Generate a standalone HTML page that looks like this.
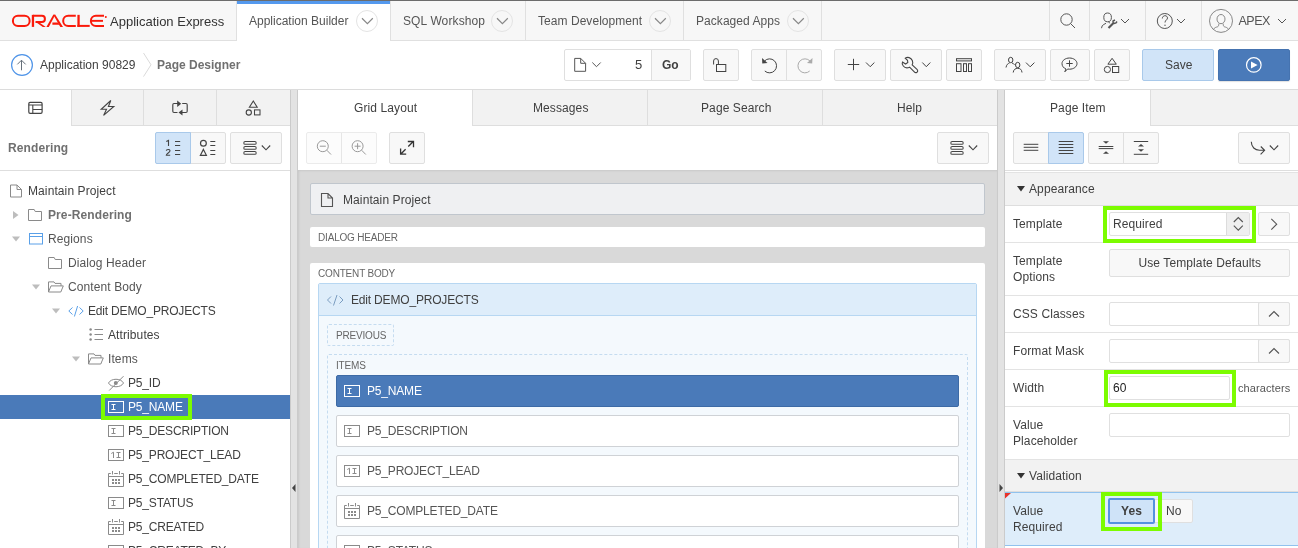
<!DOCTYPE html>
<html><head><meta charset="utf-8">
<style>
*{box-sizing:border-box}
html,body{margin:0;padding:0}
body{width:1298px;height:548px;overflow:hidden;position:relative;font-family:"Liberation Sans",sans-serif;color:#404040;background:#fff}
.a{position:absolute}
.t{position:absolute;white-space:nowrap;line-height:16px}
.btn{position:absolute;background:#f8f8f8;border:1px solid #dfdfdf;border-radius:2px}
svg{position:absolute;overflow:visible}
.ic{fill:none}
</style></head><body>
<div id="root" style="position:absolute;left:0;top:0;width:1298px;height:548px;overflow:hidden;will-change:transform">
<!-- ===== HEADER ===== -->
<div class="a" style="left:0;top:0;width:1298px;height:1px;background:#6c6c6c"></div>
<div class="a" style="left:0;top:1px;width:1298px;height:39px;background:#f7f7f7"></div>
<div class="a" style="left:0;top:40px;width:1298px;height:1px;background:#e0e0e0"></div>
<!-- logo -->
<svg style="left:0;top:0" width="120" height="40" viewBox="0 0 120 40">
<g fill="#fa1a0a">
<rect x="12.9" y="15.85" width="16.75" height="10.05" rx="5.025" fill="none" stroke="#fa1a0a" stroke-width="2"/>
<rect x="31.8" y="14.85" width="2.3" height="12.05"/>
<path d="M33,15.85 H41.9 A3.025,3.025 0 0 1 41.9,21.9 H35.5" fill="none" stroke="#fa1a0a" stroke-width="2"/>
<polygon points="35.7,21.9 38.6,21.9 45.8,26.9 42.8,26.9"/>
<polygon points="53.3,14.85 55.3,14.85 48.8,26.9 46.4,26.9"/>
<polygon points="53.3,14.85 55.3,14.85 63,26.9 60.3,26.9"/>
<polygon points="52.4,22.6 58.2,22.6 59.5,24.8 52.4,24.8"/>
<path d="M75.8,15.85 H68.2 A5.025,5.025 0 0 0 68.2,25.9 H75.8" fill="none" stroke="#fa1a0a" stroke-width="2"/>
<rect x="77.4" y="14.85" width="2.3" height="12.05"/>
<rect x="77.4" y="24.9" width="12.3" height="2"/>
<path d="M104,15.85 H95.9 A5.025,5.025 0 0 0 95.9,25.9 H104" fill="none" stroke="#fa1a0a" stroke-width="2"/>
<rect x="91.2" y="19.9" width="11.8" height="1.9"/>
<circle cx="105.8" cy="16.9" r="1"/>
</g>
</svg>
<div class="t" style="left:110px;top:14px;font-size:13px;color:#333">Application Express</div>
<!-- active tab -->
<div class="a" style="left:236px;top:1px;width:155px;height:40px;background:#fff;border-left:1px solid #e0e0e0;border-right:1px solid #e0e0e0"></div>
<div class="a" style="left:237px;top:1px;width:153px;height:3px;background:#5499ee"></div>
<div class="t" style="left:249px;top:13px;font-size:12px;color:#555">Application Builder</div>
<div class="a" style="left:356px;top:10px;width:22px;height:22px;border:1px solid #e4e4e4;border-radius:50%"></div>
<svg style="left:0;top:0" width="1" height="1"><path class="ic" d="M362,18.3 L367.4,23.6 L372.8,18.3" stroke="#888" stroke-width="1.2"/></svg>
<!-- SQL Workshop tab -->
<div class="t" style="left:403px;top:13px;font-size:12px;color:#555;letter-spacing:0.12px">SQL Workshop</div>
<div class="a" style="left:491px;top:10px;width:22px;height:22px;border:1px solid #e4e4e4;border-radius:50%"></div>
<svg style="left:0;top:0" width="1" height="1"><path class="ic" d="M497,18.3 L502.4,23.6 L507.8,18.3" stroke="#888" stroke-width="1.2"/></svg>
<div class="a" style="left:525px;top:1px;width:1px;height:39px;background:#e0e0e0"></div>
<div class="t" style="left:538px;top:13px;font-size:12px;color:#555;letter-spacing:0.05px">Team Development</div>
<div class="a" style="left:649px;top:10px;width:22px;height:22px;border:1px solid #e4e4e4;border-radius:50%"></div>
<svg style="left:0;top:0" width="1" height="1"><path class="ic" d="M655,18.3 L660.4,23.6 L665.8,18.3" stroke="#888" stroke-width="1.2"/></svg>
<div class="a" style="left:683px;top:1px;width:1px;height:39px;background:#e0e0e0"></div>
<div class="t" style="left:696px;top:13px;font-size:12px;color:#555;letter-spacing:0.05px">Packaged Apps</div>
<div class="a" style="left:787px;top:10px;width:22px;height:22px;border:1px solid #e4e4e4;border-radius:50%"></div>
<svg style="left:0;top:0" width="1" height="1"><path class="ic" d="M793,18.3 L798.4,23.6 L803.8,18.3" stroke="#888" stroke-width="1.2"/></svg>
<div class="a" style="left:821px;top:1px;width:1px;height:39px;background:#e0e0e0"></div>
<!-- right header icons -->
<div class="a" style="left:1049px;top:1px;width:1px;height:39px;background:#e0e0e0"></div>
<div class="a" style="left:1089px;top:1px;width:1px;height:39px;background:#e0e0e0"></div>
<div class="a" style="left:1145px;top:1px;width:1px;height:39px;background:#e0e0e0"></div>
<div class="a" style="left:1201px;top:1px;width:1px;height:39px;background:#e0e0e0"></div>
<svg style="left:0;top:0" width="1" height="1">
<circle class="ic" cx="1066.5" cy="19.5" r="5.7" stroke="#555"/>
<path class="ic" d="M1070.5,23.5 L1075,28" stroke="#555"/>
<ellipse class="ic" cx="1107.6" cy="17.4" rx="3.8" ry="4.4" stroke="#555"/>
<path class="ic" d="M1101.5,28.2 L1102.2,25.8 C1103,24.8 1104.5,24 1106,23.3 M1108.8,21.8 L1109.6,23.3" stroke="#555"/>
<path d="M1108.5,28 L1114,22.5" stroke="#555" stroke-width="2.2" fill="none"/>
<path d="M1113,22.5 L1113,21 L1115,20 M1114,23.5 L1116,23 L1117,21.5" stroke="#555" stroke-width="1.4" fill="none"/>
<path class="ic" d="M1121,19 L1125,23 L1129,19" stroke="#555"/>
<circle class="ic" cx="1164.8" cy="21" r="7.5" stroke="#555"/>
<path class="ic" d="M1162.3,18.5 C1162.3,16.5 1164,15.7 1165,15.7 C1166.5,15.7 1167.5,16.7 1167.5,18 C1167.5,20 1165,20 1165,22.5" stroke="#555"/>
<circle cx="1165" cy="25.3" r="0.7" fill="#555"/>
<path class="ic" d="M1177,19 L1181,23 L1185,19" stroke="#555"/>
<circle class="ic" cx="1221" cy="20.9" r="11.5" stroke="#888"/>
<ellipse class="ic" cx="1221" cy="19.1" rx="4" ry="4.6" stroke="#888"/>
<path class="ic" d="M1213.5,29.3 C1214.5,27.5 1216,27.3 1217.5,26.8 C1218.5,26.4 1218.8,25.5 1218.8,23.6 M1228.5,29.3 C1227.5,27.5 1226,27.3 1224.5,26.8 C1223.5,26.4 1223.2,25.5 1223.2,23.6" stroke="#888"/>
<path class="ic" d="M1278,19 L1282,23 L1286,19" stroke="#555"/>
</svg>
<div class="t" style="left:1238.5px;top:13px;font-size:12.5px;color:#555;letter-spacing:-0.5px">APEX</div>
<!-- ===== TOOLBAR ===== -->
<div class="a" style="left:0;top:89px;width:1298px;height:1px;background:#dcdcdc"></div>
<svg style="left:0;top:0" width="1" height="1">
<circle cx="22" cy="65" r="10.4" fill="none" stroke="#4f94e8" stroke-width="1.2"/>
<path class="ic" d="M21.5,60.2 V70.3 M17.3,64.4 L21.5,60.2 L25.7,64.4" stroke="#66707a"/>
<path d="M143.5,53 L151,64.8 L143.5,76.6" fill="none" stroke="#dadada" stroke-width="1"/>
</svg>
<div class="t" style="left:40px;top:57px;font-size:12px;color:#404040">Application 90829</div>
<div class="t" style="left:157px;top:57px;font-size:12px;font-weight:bold;color:#707070">Page Designer</div>
<!-- page selector -->
<div class="btn" style="left:564px;top:49px;width:127px;height:32px;background:#fff"></div>
<div class="a" style="left:651px;top:50px;width:39px;height:30px;background:#f8f8f8;border-left:1px solid #dfdfdf"></div>
<svg style="left:0;top:0" width="1" height="1">
<path class="ic" d="M574.7,58.4 H580.7 L585.6,63.3 V71.3 H574.7 Z M580.7,58.4 V63.3 H585.6" stroke="#555"/>
<path class="ic" d="M592.3,62.5 L596.5,66.7 L600.7,62.5" stroke="#555"/>
</svg>
<div class="t" style="left:635px;top:57px;font-size:13px;color:#404040">5</div>
<div class="t" style="left:662px;top:57px;font-size:12px;font-weight:bold;color:#404040">Go</div>
<!-- lock -->
<div class="btn" style="left:703px;top:49px;width:36px;height:32px"></div>
<svg style="left:0;top:0" width="1" height="1">
<path class="ic" d="M713.6,64.5 V61 A2.4,2.4 0 0 1 718.4,61 V64.5" stroke="#444"/>
<rect class="ic" x="716.5" y="64.5" width="9.3" height="7" stroke="#444"/>
</svg>
<!-- undo redo -->
<div class="btn" style="left:751px;top:49px;width:71px;height:32px"></div>
<div class="a" style="left:786px;top:50px;width:1px;height:30px;background:#dfdfdf"></div>
<svg style="left:0;top:0" width="1" height="1">
<path class="ic" d="M764.5,61 A7,7 0 1 1 764.8,71" stroke="#444"/>
<polygon points="762,58 762.3,63.5 767.5,63" fill="#444"/>
<path class="ic" d="M810,61 A7,7 0 1 0 809.7,71" stroke="#aaa"/>
<polygon points="812.5,58 812.2,63.5 807,63" fill="#aaa"/>
</svg>
<!-- plus -->
<div class="btn" style="left:834px;top:49px;width:52px;height:32px"></div>
<svg style="left:0;top:0" width="1" height="1">
<path class="ic" d="M847.8,64.5 H859.2 M853.5,58.8 V70.2" stroke="#444"/>
<path class="ic" d="M866,62.5 L870.2,66.7 L874.4,62.5" stroke="#444"/>
</svg>
<!-- wrench -->
<div class="btn" style="left:890px;top:49px;width:52px;height:32px"></div>
<svg style="left:0;top:0" width="1" height="1">
<path class="ic" d="M905.3,58.3 C907.5,56.5 911,57.5 912.3,60.5 C913,62.3 912.8,63.8 912.2,64.8 L917,69.3 C918,70.3 917.8,71.5 917,72.2 C916.2,72.8 915,72.7 914.3,71.9 L909.6,67.2 C908,67.9 905,68.2 903.3,66 C902,64.5 902,63 902.5,62 L905.6,64 L907.8,62.5 L907.5,60.3 Z" stroke="#444" stroke-width="1.1"/>
<path class="ic" d="M922.3,62.5 L926.3,66.7 L930.3,62.5" stroke="#444"/>
</svg>
<!-- grid -->
<div class="btn" style="left:946px;top:49px;width:36px;height:32px"></div>
<svg style="left:0;top:0" width="1" height="1">
<rect class="ic" x="956.5" y="58.7" width="15" height="2.2" stroke="#444"/>
<rect class="ic" x="956.5" y="63.7" width="4.5" height="7.8" stroke="#444"/>
<rect class="ic" x="963.5" y="63.7" width="3" height="7.8" stroke="#444"/>
<rect class="ic" x="968.5" y="63.7" width="3" height="7.8" stroke="#444"/>
</svg>
<!-- people -->
<div class="btn" style="left:994px;top:49px;width:52px;height:32px"></div>
<svg style="left:0;top:0" width="1" height="1">
<ellipse class="ic" cx="1010.7" cy="60" rx="2.2" ry="2.7" stroke="#444"/>
<path class="ic" d="M1006,67.5 C1006.5,64.5 1008,63.5 1009.5,63" stroke="#444"/>
<path class="ic" d="M1012,63 C1013,63.3 1014,63.8 1014.5,64.8" stroke="#444"/>
<ellipse class="ic" cx="1017.7" cy="65" rx="2.2" ry="2.7" stroke="#444"/>
<path class="ic" d="M1013.2,72.5 C1013.5,69.5 1015.5,68.3 1017.7,68.3 C1020,68.3 1021.8,69.5 1022,72.5" stroke="#444"/>
<path class="ic" d="M1026,62.6 L1030.2,66.8 L1034.4,62.6" stroke="#444"/>
</svg>
<!-- comment -->
<div class="btn" style="left:1050px;top:49px;width:40px;height:32px"></div>
<svg style="left:0;top:0" width="1" height="1">
<path class="ic" d="M1066,69 C1063.5,68 1062,66 1062,63.6 C1062,60.5 1065.3,58 1069.5,58 C1073.7,58 1077,60.5 1077,63.6 C1077,66.7 1073.7,69.2 1069.5,69.2 C1068.8,69.2 1068.2,69.1 1067.6,69 L1064.8,71.8 Z" stroke="#444"/>
<path class="ic" d="M1066.3,63.5 H1072.7 M1069.5,60.3 V66.7" stroke="#444"/>
</svg>
<!-- shapes -->
<div class="btn" style="left:1094px;top:49px;width:36px;height:32px"></div>
<svg style="left:0;top:0" width="1" height="1">
<path class="ic" d="M1112.1,58.3 L1116.3,64.2 H1107.9 Z" stroke="#444"/>
<circle class="ic" cx="1107.4" cy="69.5" r="3.1" stroke="#444"/>
<rect class="ic" x="1112.5" y="66.5" width="6.2" height="6" stroke="#444"/>
</svg>
<!-- save / run -->
<div class="btn" style="left:1142px;top:49px;width:72px;height:32px;background:#d1e4f8;border-color:#a9c9ea"></div>
<div class="t" style="left:1165px;top:57px;font-size:12px;color:#404040">Save</div>
<div class="btn" style="left:1218px;top:49px;width:72px;height:32px;background:#4a7ab9;border-color:#4573b0;box-shadow:0 1px 1px rgba(0,0,0,.12)"></div>
<svg style="left:0;top:0" width="1" height="1">
<circle cx="1253.8" cy="64.9" r="7.3" fill="none" stroke="#fff" stroke-width="1.2"/>
<polygon points="1251,61.6 1257.6,65 1251,68.4" fill="#fff"/>
</svg>
<div class="a" style="left:0px;top:90px;width:290px;height:35px;background:#f2f2f2"></div>
<div class="a" style="left:0px;top:90px;width:71px;height:36px;background:#fff"></div>
<div class="a" style="left:71px;top:125px;width:219px;height:1px;background:#dedede"></div>
<div class="a" style="left:71px;top:90px;width:1px;height:35px;background:#dedede"></div>
<div class="a" style="left:143px;top:90px;width:1px;height:35px;background:#dedede"></div>
<div class="a" style="left:216px;top:90px;width:1px;height:35px;background:#dedede"></div>
<svg style="left:0;top:0" width="1" height="1">
<rect class="ic" x="28.8" y="102.4" width="13.3" height="11" rx="1.3" stroke="#444" stroke-width="1.2"/>
<path class="ic" d="M28.8,105 H42.1 M32.8,105 V113.4 M32.8,109.5 H42.1" stroke="#444" stroke-width="1.1"/>
<path class="ic" d="M110.8,100.5 L101.2,109.3 H106.5 L103.6,115.4 L113.8,106.5 H108.4 Z" stroke="#444" stroke-width="1.1"/>
<path class="ic" d="M178.4,103.5 H174 Q172.8,103.5 172.8,104.7 V111.3 Q172.8,112.5 174,112.5 H177.5 M182.2,103.5 H186 Q187.2,103.5 187.2,104.7 V111.3 Q187.2,112.5 186,112.5 H181.2" stroke="#444" stroke-width="1.15"/>
<polygon points="177.2,100.5 181.2,103.7 177.2,106.9" fill="#444"/>
<polygon points="182.5,109.4 178.5,112.5 182.5,115.6" fill="#444"/>
<path class="ic" d="M253.3,101 L257.2,107.2 H249.4 Z" stroke="#444" stroke-width="1.1"/>
<circle class="ic" cx="248.8" cy="112.5" r="2.6" stroke="#444" stroke-width="1.1"/>
<rect class="ic" x="254.5" y="109.9" width="5.5" height="5" stroke="#444" stroke-width="1.05"/>
</svg>
<div class="a" style="left:0px;top:170px;width:290px;height:1px;background:#dedede"></div>
<div class="t" style="left:8px;top:140.34px;font-size:12px;color:#707070;letter-spacing:0.1px;font-weight:bold;">Rendering</div>
<div class="btn" style="left:155px;top:132px;width:71px;height:32px"></div>
<div class="a" style="left:155px;top:132px;width:36px;height:32px;background:#d1e4f8;border:1px solid #a9c9ea;border-radius:2px 0 0 2px"></div>
<div class="btn" style="left:230px;top:132px;width:52px;height:32px"></div>
<svg style="left:0;top:0" width="1" height="1">
<path class="ic" d="M166.3,141.6 L168.5,140.5 V146" stroke="#444" stroke-width="1.1"/>
<path class="ic" d="M166.3,150.8 C166.3,149.3 170,148.8 170,150.8 C170,152.5 166.3,153.5 166.3,155.3 H170.2" stroke="#444" stroke-width="1.1"/>
<path class="ic" d="M175,141.5 H180.2 M175,145.5 H180.2 M175,150.5 H180.2 M175,154.5 H180.2" stroke="#444" stroke-width="1"/>
<circle class="ic" cx="203.4" cy="143.3" r="2.9" stroke="#444" stroke-width="1.2"/>
<path class="ic" d="M203.4,149.4 L206.4,155.3 H200.4 Z" stroke="#444" stroke-width="1.2"/>
<path class="ic" d="M210.3,141.5 H215.3 M210.3,145.5 H215.3 M210.3,150.5 H215.3 M210.3,154.5 H215.3" stroke="#444" stroke-width="1"/>
<rect class="ic" x="243.8" y="141.5" width="12.4" height="2.8" rx="1.4" stroke="#444" stroke-width="1.05"/>
<rect class="ic" x="243.8" y="146.5" width="12.4" height="2.8" rx="1.4" stroke="#444" stroke-width="1.05"/>
<rect class="ic" x="243.8" y="151.5" width="12.4" height="2.8" rx="1.4" stroke="#444" stroke-width="1.05"/>
<path class="ic" d="M261.8,145.5 L266,149.8 L270.2,145.5" stroke="#444" stroke-width="1.1"/>
</svg>
<div class="a" style="left:0px;top:395px;width:290px;height:24px;background:#4a7ab9"></div>
<div class="t" style="left:28px;top:182.84px;font-size:12px;color:#404040;letter-spacing:0.1px;">Maintain Project</div>
<div class="t" style="left:48px;top:206.84px;font-size:12px;color:#707070;letter-spacing:0.1px;font-weight:bold;">Pre-Rendering</div>
<div class="t" style="left:48px;top:230.84px;font-size:12px;color:#555;letter-spacing:0.1px;">Regions</div>
<div class="t" style="left:68px;top:254.84px;font-size:12px;color:#555;letter-spacing:0.1px;">Dialog Header</div>
<div class="t" style="left:68px;top:278.84px;font-size:12px;color:#555;letter-spacing:0.1px;">Content Body</div>
<div class="t" style="left:88px;top:302.84px;font-size:12px;color:#404040;letter-spacing:-0.18px;">Edit DEMO_PROJECTS</div>
<div class="t" style="left:108px;top:326.84px;font-size:12px;color:#404040;letter-spacing:0.1px;">Attributes</div>
<div class="t" style="left:108px;top:350.84px;font-size:12px;color:#555;letter-spacing:0.1px;">Items</div>
<div class="t" style="left:128px;top:374.84px;font-size:12px;color:#404040;letter-spacing:-0.18px;">P5_ID</div>
<div class="t" style="left:128px;top:398.84px;font-size:12px;color:#fff;letter-spacing:-0.18px;">P5_NAME</div>
<div class="t" style="left:128px;top:422.84px;font-size:12px;color:#404040;letter-spacing:-0.18px;">P5_DESCRIPTION</div>
<div class="t" style="left:128px;top:446.84px;font-size:12px;color:#404040;letter-spacing:-0.18px;">P5_PROJECT_LEAD</div>
<div class="t" style="left:128px;top:470.84px;font-size:12px;color:#404040;letter-spacing:-0.18px;">P5_COMPLETED_DATE</div>
<div class="t" style="left:128px;top:494.84px;font-size:12px;color:#404040;letter-spacing:-0.18px;">P5_STATUS</div>
<div class="t" style="left:128px;top:518.84px;font-size:12px;color:#404040;letter-spacing:-0.18px;">P5_CREATED</div>
<div class="t" style="left:128px;top:542.84px;font-size:12px;color:#404040;letter-spacing:-0.18px;">P5_CREATED_BY</div>
<svg style="left:0;top:0" width="1" height="1"><path class="ic" d="M10.5,185.0 H17 L21.5,189.5 V197.0 H10.5 Z M17,185.0 V189.5 H21.5" stroke="#8a8a8a"/><polygon points="13,211 18.5,215 13,219" fill="#bdbdbd"/><path class="ic" d="M28.5,209.5 H34.2 L35.2,211.5 H41.5 V220.5 H28.5 Z" stroke="#8a8a8a"/><polygon points="12,236.5 20,236.5 16,241.5" fill="#bdbdbd"/><rect class="ic" x="29.5" y="233.5" width="13" height="10.5" stroke="#5aa0e8"/><path class="ic" d="M29.5,236.5 H42.5" stroke="#5aa0e8"/><path class="ic" d="M48.5,257.5 H54.2 L55.2,259.5 H61.5 V268.5 H48.5 Z" stroke="#8a8a8a"/><polygon points="32,284.5 40,284.5 36,289.5" fill="#bdbdbd"/><path class="ic" d="M48.5,292.0 V281.9 H54 L55,283.4 H61 V285.9 M48.5,292.0 L51,285.9 H63.3 L60.8,292.0 Z" stroke="#8a8a8a"/><polygon points="52,308.5 60,308.5 56,313.5" fill="#bdbdbd"/><path class="ic" d="M72.5,307.5 L68.8,311 L72.5,314.5 M79.5,307.5 L83.2,311 L79.5,314.5 M77.6,306 L74.4,316.5" stroke="#5aa0e8"/><circle cx="90.6" cy="329.5" r="1.25" fill="#8a8a8a"/><path class="ic" d="M94.5,329.5 H103" stroke="#8a8a8a"/><circle cx="90.6" cy="334.5" r="1.25" fill="#8a8a8a"/><path class="ic" d="M94.5,334.5 H103" stroke="#8a8a8a"/><circle cx="90.6" cy="339.5" r="1.25" fill="#8a8a8a"/><path class="ic" d="M94.5,339.5 H103" stroke="#8a8a8a"/><polygon points="72,356.5 80,356.5 76,361.5" fill="#bdbdbd"/><path class="ic" d="M88.5,364.0 V353.9 H94 L95,355.4 H101 V357.9 M88.5,364.0 L91,357.9 H103.3 L100.8,364.0 Z" stroke="#8a8a8a"/><path class="ic" d="M108.5,383 C111,378 121,378 123.5,383 C121,388 111,388 108.5,383 Z" stroke="#8a8a8a"/><circle cx="115.8" cy="383" r="2" fill="#8a8a8a"/><path class="ic" d="M109.2,390.5 L123.5,376.2" stroke="#8a8a8a"/><rect class="ic" x="108.5" y="401.5" width="15" height="11" stroke="#fff"/><path class="ic" d="M111.5,404.5 H115.5 M113.5,404.5 V409.5 M111.5,409.5 H115.5" stroke="#fff" stroke-width="1"/><rect class="ic" x="108.5" y="425.5" width="15" height="11" stroke="#8a8a8a"/><path class="ic" d="M111.5,428.5 H115.5 M113.5,428.5 V433.5 M111.5,433.5 H115.5" stroke="#8a8a8a" stroke-width="1"/><rect class="ic" x="108.5" y="449.5" width="15" height="11" stroke="#8a8a8a"/><path class="ic" d="M116.5,452.5 H120.5 M118.5,452.5 V457.5 M116.5,457.5 H120.5" stroke="#8a8a8a" stroke-width="1"/><path class="ic" d="M111.3,453.5 L113.5,452.2 V458" stroke="#8a8a8a"/><path class="ic" d="M110.8,473.5 H108.5 V486.5 H123.5 V473.5 H121.2 M114.2,473.5 H117.8 M108.5,476.5 H123.5 M112.5,471 V474.5 M119.5,471 V474.5" stroke="#8a8a8a"/><rect x="112" y="479" width="2" height="2" fill="#8a8a8a"/><rect x="115" y="479" width="2" height="2" fill="#8a8a8a"/><rect x="118" y="479" width="2" height="2" fill="#8a8a8a"/><rect x="112" y="482" width="2" height="2" fill="#8a8a8a"/><rect x="115" y="482" width="2" height="2" fill="#8a8a8a"/><rect x="118" y="482" width="2" height="2" fill="#8a8a8a"/><rect class="ic" x="108.5" y="497.5" width="15" height="11" stroke="#8a8a8a"/><path class="ic" d="M111.5,500.5 H115.5 M113.5,500.5 V505.5 M111.5,505.5 H115.5" stroke="#8a8a8a" stroke-width="1"/><path class="ic" d="M110.8,521.5 H108.5 V534.5 H123.5 V521.5 H121.2 M114.2,521.5 H117.8 M108.5,524.5 H123.5 M112.5,519 V522.5 M119.5,519 V522.5" stroke="#8a8a8a"/><rect x="112" y="527" width="2" height="2" fill="#8a8a8a"/><rect x="115" y="527" width="2" height="2" fill="#8a8a8a"/><rect x="118" y="527" width="2" height="2" fill="#8a8a8a"/><rect x="112" y="530" width="2" height="2" fill="#8a8a8a"/><rect x="115" y="530" width="2" height="2" fill="#8a8a8a"/><rect x="118" y="530" width="2" height="2" fill="#8a8a8a"/><rect class="ic" x="108.5" y="545.5" width="15" height="11" stroke="#8a8a8a"/><path class="ic" d="M111.5,548.5 H115.5 M113.5,548.5 V553.5 M111.5,553.5 H115.5" stroke="#8a8a8a" stroke-width="1"/></svg>
<div class="a" style="left:101px;top:394px;width:91px;height:26px;border:4px solid #7cfc00"></div>
<div class="a" style="left:290px;top:90px;width:8px;height:458px;background:#e3e3e3;border-left:1px solid #cbcbcb;border-right:1px solid #cbcbcb"></div>
<svg style="left:0;top:0" width="1" height="1"><polygon points="295.5,484 292,488 295.5,492" fill="#444"/></svg>
<div class="a" style="left:298px;top:90px;width:699px;height:35px;background:#f2f2f2"></div>
<div class="a" style="left:298px;top:90px;width:174px;height:36px;background:#fff"></div>
<div class="a" style="left:472px;top:125px;width:525px;height:1px;background:#dedede"></div>
<div class="a" style="left:472px;top:90px;width:1px;height:35px;background:#dedede"></div>
<div class="a" style="left:647px;top:90px;width:1px;height:35px;background:#dedede"></div>
<div class="a" style="left:822px;top:90px;width:1px;height:35px;background:#dedede"></div>
<div class="t" style="left:354px;top:99.84px;font-size:12px;color:#404040;letter-spacing:0.1px;">Grid Layout</div>
<div class="t" style="left:533px;top:99.84px;font-size:12px;color:#404040;letter-spacing:0.1px;">Messages</div>
<div class="t" style="left:701px;top:99.84px;font-size:12px;color:#404040;letter-spacing:0.1px;">Page Search</div>
<div class="t" style="left:897px;top:99.84px;font-size:12px;color:#404040;letter-spacing:0.1px;">Help</div>
<div class="btn" style="left:306px;top:132px;width:71px;height:32px;background:#fcfcfc;border-color:#ebebeb"></div>
<div class="a" style="left:341px;top:133px;width:1px;height:30px;background:#e6e6e6"></div>
<div class="btn" style="left:389px;top:132px;width:36px;height:32px"></div>
<div class="btn" style="left:937px;top:132px;width:52px;height:32px"></div>
<svg style="left:0;top:0" width="1" height="1">
<circle class="ic" cx="322.8" cy="146.2" r="5.5" stroke="#999"/>
<path class="ic" d="M326.8,150.2 L331,154.5 M319.8,146.2 H325.8" stroke="#999"/>
<circle class="ic" cx="357.6" cy="146.2" r="5.5" stroke="#999"/>
<path class="ic" d="M361.6,150.2 L365.8,154.5 M354.6,146.2 H360.6 M357.6,143.2 V149.2" stroke="#999"/>
<path class="ic" d="M400.6,154.2 L405.6,149.2 M408.3,146.5 L413.5,141.3 M407.8,141.5 H413.5 V147.2 M400.6,148.6 V154.2 H406.2" stroke="#333" stroke-width="1.3"/>
<rect class="ic" x="950.8" y="141.5" width="12.4" height="2.8" rx="1.4" stroke="#444" stroke-width="1.05"/>
<rect class="ic" x="950.8" y="146.5" width="12.4" height="2.8" rx="1.4" stroke="#444" stroke-width="1.05"/>
<rect class="ic" x="950.8" y="151.5" width="12.4" height="2.8" rx="1.4" stroke="#444" stroke-width="1.05"/>
<path class="ic" d="M968.8,145.5 L973,149.8 L977.2,145.5" stroke="#444" stroke-width="1.1"/>
</svg>
<div class="a" style="left:298px;top:170px;width:699px;height:378px;background:#d9d9d9;box-shadow:inset 1px 1px 2px rgba(0,0,0,.08)"></div>
<div class="a" style="left:310px;top:183px;width:675px;height:32px;background:#eff0f2;border:1px solid #c0c6cd;border-radius:2px"></div>
<svg style="left:0;top:0" width="1" height="1"><path class="ic" d="M321.5,193.5 H328 L332.5,198 V206.5 H321.5 Z M328,193.5 V198 H332.5" stroke="#555" stroke-width="1.1"/></svg>
<div class="t" style="left:343px;top:191.84px;font-size:12px;color:#404040;letter-spacing:0.1px;">Maintain Project</div>
<div class="a" style="left:310px;top:227px;width:675px;height:20px;background:#fff;border-radius:2px"></div>
<div class="t" style="left:318px;top:230.03px;font-size:10px;color:#666;letter-spacing:-0.18px;">DIALOG HEADER</div>
<div class="a" style="left:310px;top:263px;width:675px;height:290px;background:#fff;border-radius:2px"></div>
<div class="t" style="left:318px;top:266.14px;font-size:10px;color:#666;letter-spacing:-0.18px;">CONTENT BODY</div>
<div class="a" style="left:318px;top:283px;width:659px;height:270px;background:#f4f9fd;border:1px solid #b7d7f2;border-radius:2px"></div>
<div class="a" style="left:319px;top:284px;width:657px;height:32px;background:#deedfa;border-bottom:1px solid #b7d7f2"></div>
<svg style="left:0;top:0" width="1" height="1"><path class="ic" d="M331,296.5 L327.5,300 L331,303.5 M339.5,296.5 L343,300 L339.5,303.5 M337,295 L333.5,305.5" stroke="#7a9cc0" stroke-width="1"/></svg>
<div class="t" style="left:351px;top:291.84px;font-size:12px;color:#404040;letter-spacing:-0.18px;">Edit DEMO_PROJECTS</div>
<div class="a" style="left:327px;top:324px;width:67px;height:22px;border:1px dashed #c5dcf0;border-radius:2px"></div>
<div class="t" style="left:336px;top:327.54px;font-size:10px;color:#666;letter-spacing:-0.18px;">PREVIOUS</div>
<div class="a" style="left:327px;top:354px;width:641px;height:200px;border:1px dashed #c5dcf0;border-radius:2px"></div>
<div class="t" style="left:336px;top:357.84px;font-size:10px;color:#666;letter-spacing:-0.18px;">ITEMS</div>
<div class="a" style="left:336px;top:375px;width:623px;height:32px;background:#4a7ab9;border:1px solid #3d6aa5;border-radius:2px"></div>
<div class="t" style="left:367px;top:383.34px;font-size:12px;color:#fff;letter-spacing:-0.18px;">P5_NAME</div>
<div class="a" style="left:336px;top:415px;width:623px;height:32px;background:#fff;border:1px solid #cfd2d6;border-radius:2px"></div>
<div class="t" style="left:367px;top:423.34px;font-size:12px;color:#555;letter-spacing:-0.18px;">P5_DESCRIPTION</div>
<div class="a" style="left:336px;top:455px;width:623px;height:32px;background:#fff;border:1px solid #cfd2d6;border-radius:2px"></div>
<div class="t" style="left:367px;top:463.34px;font-size:12px;color:#555;letter-spacing:-0.18px;">P5_PROJECT_LEAD</div>
<div class="a" style="left:336px;top:495px;width:623px;height:32px;background:#fff;border:1px solid #cfd2d6;border-radius:2px"></div>
<div class="t" style="left:367px;top:503.34px;font-size:12px;color:#555;letter-spacing:-0.18px;">P5_COMPLETED_DATE</div>
<div class="a" style="left:336px;top:535px;width:623px;height:32px;background:#fff;border:1px solid #cfd2d6;border-radius:2px"></div>
<div class="t" style="left:367px;top:543.34px;font-size:12px;color:#555;letter-spacing:-0.18px;">P5_STATUS</div>
<svg style="left:0;top:0" width="1" height="1"><rect class="ic" x="344.5" y="385.5" width="15" height="11" stroke="#fff"/><path class="ic" d="M347.5,388.5 H351.5 M349.5,388.5 V393.5 M347.5,393.5 H351.5" stroke="#fff" stroke-width="1"/><rect class="ic" x="344.5" y="425.5" width="15" height="11" stroke="#8a8a8a"/><path class="ic" d="M347.5,428.5 H351.5 M349.5,428.5 V433.5 M347.5,433.5 H351.5" stroke="#8a8a8a" stroke-width="1"/><rect class="ic" x="344.5" y="465.5" width="15" height="11" stroke="#8a8a8a"/><path class="ic" d="M352.5,468.5 H356.5 M354.5,468.5 V473.5 M352.5,473.5 H356.5" stroke="#8a8a8a" stroke-width="1"/><path class="ic" d="M347.3,469.5 L349.5,468.2 V474" stroke="#8a8a8a"/><path class="ic" d="M346.8,505.5 H344.5 V518.5 H359.5 V505.5 H357.2 M350.2,505.5 H353.8 M344.5,508.5 H359.5 M348.5,503 V506.5 M355.5,503 V506.5" stroke="#8a8a8a"/><rect x="348" y="511" width="2" height="2" fill="#8a8a8a"/><rect x="351" y="511" width="2" height="2" fill="#8a8a8a"/><rect x="354" y="511" width="2" height="2" fill="#8a8a8a"/><rect x="348" y="514" width="2" height="2" fill="#8a8a8a"/><rect x="351" y="514" width="2" height="2" fill="#8a8a8a"/><rect x="354" y="514" width="2" height="2" fill="#8a8a8a"/><rect class="ic" x="344.5" y="545.5" width="15" height="11" stroke="#8a8a8a"/><path class="ic" d="M347.5,548.5 H351.5 M349.5,548.5 V553.5 M347.5,553.5 H351.5" stroke="#8a8a8a" stroke-width="1"/></svg>
<div class="a" style="left:997px;top:90px;width:8px;height:458px;background:#e3e3e3;border-left:1px solid #cbcbcb;border-right:1px solid #cbcbcb"></div>
<svg style="left:0;top:0" width="1" height="1"><polygon points="999.5,484 1003,488 999.5,492" fill="#444"/></svg>
<div class="a" style="left:1005px;top:90px;width:293px;height:35px;background:#f2f2f2"></div>
<div class="a" style="left:1005px;top:90px;width:145px;height:36px;background:#fff"></div>
<div class="a" style="left:1150px;top:90px;width:1px;height:35px;background:#dedede"></div>
<div class="a" style="left:1150px;top:125px;width:148px;height:1px;background:#dedede"></div>
<div class="t" style="left:1050px;top:99.84px;font-size:12px;color:#404040;letter-spacing:0.1px;">Page Item</div>
<div class="btn" style="left:1013px;top:132px;width:71px;height:32px"></div>
<div class="a" style="left:1048px;top:132px;width:36px;height:32px;background:#d1e4f8;border:1px solid #a9c9ea;border-radius:0 2px 2px 0"></div>
<div class="btn" style="left:1088px;top:132px;width:71px;height:32px"></div>
<div class="a" style="left:1123px;top:133px;width:1px;height:30px;background:#dfdfdf"></div>
<div class="btn" style="left:1238px;top:132px;width:52px;height:32px"></div>
<svg style="left:0;top:0" width="1" height="1">
<path class="ic" d="M1023.7,144.3 H1038.3 M1023.7,147.3 H1038.3 M1023.7,150.3 H1038.3" stroke="#444"/>
<path class="ic" d="M1058.7,141.5 H1073.3 M1058.7,144.5 H1073.3 M1058.7,147.5 H1073.3 M1058.7,150.5 H1073.3 M1058.7,153.5 H1073.3" stroke="#444"/>
<path class="ic" d="M1098.7,146.5 H1113.3 M1098.7,148.6 H1113.3" stroke="#444"/>
<polygon points="1103,141.2 1109,141.2 1106,143.8" fill="#444"/>
<polygon points="1103,153.8 1109,153.8 1106,151.2" fill="#444"/>
<path class="ic" d="M1133.8,141.5 H1148.2 M1133.8,154.3 H1148.2" stroke="#444"/>
<polygon points="1138,146.5 1144,146.5 1141,143.9" fill="#444"/>
<polygon points="1138,149.2 1144,149.2 1141,151.8" fill="#444"/>
<path class="ic" d="M1251.3,141.8 C1251.3,147 1255,150.3 1259.5,150.3 H1264.6 M1260.8,146.5 L1264.6,150.3 L1260.6,154.3" stroke="#444" stroke-width="1.1"/>
<path class="ic" d="M1269.8,145.5 L1274,149.8 L1278.2,145.5" stroke="#444" stroke-width="1.1"/>
</svg>
<div class="a" style="left:1005px;top:170px;width:293px;height:1px;background:#dedede"></div>
<div class="a" style="left:1005px;top:172px;width:293px;height:34px;background:#f2f2f2;border-top:1px solid #e3e3e3;border-bottom:1px solid #dedede"></div>
<svg style="left:0;top:0" width="1" height="1"><polygon points="1017,186 1025,186 1021,191.6" fill="#333"/></svg>
<div class="t" style="left:1029px;top:180.84px;font-size:12px;color:#404040;letter-spacing:0.1px;">Appearance</div>
<div class="t" style="left:1013px;top:216.44px;font-size:12px;color:#404040;letter-spacing:0.1px;">Template</div>
<div class="a" style="left:1109px;top:212px;width:141px;height:24px;background:#fff;border:1px solid #e0e0e0;border-radius:2px"></div>
<div class="a" style="left:1226px;top:213px;width:23px;height:22px;background:#efefef;border-left:1px solid #dcdcdc"></div>
<div class="t" style="left:1113px;top:216.44px;font-size:12px;color:#404040;letter-spacing:0.1px;">Required</div>
<svg style="left:0;top:0" width="1" height="1"><path class="ic" d="M1233.8,222 L1238.3,217.5 L1242.8,222 M1233.8,225.6 L1238.3,230.1 L1242.8,225.6" stroke="#555" stroke-width="1.1"/></svg>
<div class="btn" style="left:1258px;top:212px;width:32px;height:24px"></div>
<svg style="left:0;top:0" width="1" height="1"><path class="ic" d="M1271.3,218.8 L1276.7,224.2 L1271.3,229.6" stroke="#555" stroke-width="1.1"/></svg>
<div class="a" style="left:1005px;top:242px;width:293px;height:1px;background:#e3e3e3"></div>
<div class="t" style="left:1013px;top:252.64px;font-size:12px;color:#404040;letter-spacing:0.1px;">Template</div>
<div class="t" style="left:1013px;top:268.64px;font-size:12px;color:#404040;letter-spacing:0.1px;">Options</div>
<div class="btn" style="left:1109px;top:249px;width:181px;height:28px"></div>
<div class="t" style="left:1138.5px;top:255.04px;font-size:12px;color:#404040;letter-spacing:0.1px;">Use Template Defaults</div>
<div class="a" style="left:1005px;top:295px;width:293px;height:1px;background:#e3e3e3"></div>
<div class="t" style="left:1013px;top:305.74px;font-size:12px;color:#404040;letter-spacing:0.1px;">CSS Classes</div>
<div class="a" style="left:1109px;top:302px;width:181px;height:24px;background:#fff;border:1px solid #e0e0e0;border-radius:2px"></div>
<div class="btn" style="left:1258px;top:302px;width:32px;height:24px"></div>
<svg style="left:0;top:0" width="1" height="1"><path class="ic" d="M1269,316.5 L1274,311.5 L1279,316.5" stroke="#555" stroke-width="1.1"/></svg>
<div class="a" style="left:1005px;top:332px;width:293px;height:1px;background:#e3e3e3"></div>
<div class="t" style="left:1013px;top:342.64px;font-size:12px;color:#404040;letter-spacing:0.1px;">Format Mask</div>
<div class="a" style="left:1109px;top:339px;width:181px;height:24px;background:#fff;border:1px solid #e0e0e0;border-radius:2px"></div>
<div class="btn" style="left:1258px;top:339px;width:32px;height:24px"></div>
<svg style="left:0;top:0" width="1" height="1"><path class="ic" d="M1269,353.5 L1274,348.5 L1279,353.5" stroke="#555" stroke-width="1.1"/></svg>
<div class="a" style="left:1005px;top:369px;width:293px;height:1px;background:#e3e3e3"></div>
<div class="t" style="left:1013px;top:379.84px;font-size:12px;color:#404040;letter-spacing:0.1px;">Width</div>
<div class="a" style="left:1109px;top:376px;width:121px;height:24px;background:#fff;border:1px solid #e0e0e0;border-radius:2px"></div>
<div class="t" style="left:1113px;top:379.84px;font-size:12px;color:#222;letter-spacing:0.1px;">60</div>
<div class="t" style="left:1238px;top:380.19px;font-size:11px;color:#555;letter-spacing:0.1px;">characters</div>
<div class="a" style="left:1005px;top:406px;width:293px;height:1px;background:#e3e3e3"></div>
<div class="t" style="left:1013px;top:416.54px;font-size:12px;color:#404040;letter-spacing:0.1px;">Value</div>
<div class="t" style="left:1013px;top:432.54px;font-size:12px;color:#404040;letter-spacing:0.1px;">Placeholder</div>
<div class="a" style="left:1109px;top:413px;width:181px;height:24px;background:#fff;border:1px solid #e0e0e0;border-radius:2px"></div>
<div class="a" style="left:1005px;top:459px;width:293px;height:33px;background:#f2f2f2;border-top:1px solid #e3e3e3;border-bottom:1px solid #dedede"></div>
<svg style="left:0;top:0" width="1" height="1"><polygon points="1017,473 1025,473 1021,478.6" fill="#333"/></svg>
<div class="t" style="left:1029px;top:467.84px;font-size:12px;color:#404040;letter-spacing:0.1px;">Validation</div>
<div class="a" style="left:1005px;top:492px;width:293px;height:54px;background:#deedfa;border-top:1px solid #91c2ee;border-bottom:1px solid #91c2ee"></div>
<svg style="left:0;top:0" width="1" height="1"><polygon points="1005,493 1011,493 1005,498.5" fill="#e8322a"/></svg>
<div class="t" style="left:1013px;top:502.64px;font-size:12px;color:#404040;letter-spacing:0.1px;">Value</div>
<div class="t" style="left:1013px;top:518.64px;font-size:12px;color:#404040;letter-spacing:0.1px;">Required</div>
<div class="btn" style="left:1153px;top:499px;width:40px;height:24px"></div>
<div class="a" style="left:1108px;top:498px;width:47px;height:26px;background:#cfe3f8;border:2px solid #5592e0;border-radius:2px"></div>
<div class="t" style="left:1121px;top:502.64px;font-size:12px;color:#404040;letter-spacing:0.1px;font-weight:bold;">Yes</div>
<div class="t" style="left:1166px;top:502.64px;font-size:12px;color:#404040;letter-spacing:0.1px;">No</div>
<div class="a" style="left:1101px;top:492px;width:61px;height:39px;border:4px solid #7cfc00"></div>
<div class="a" style="left:1103px;top:206px;width:153px;height:37px;border:4px solid #7cfc00"></div>
<div class="a" style="left:1104px;top:370px;width:132px;height:37px;border:4px solid #7cfc00"></div>
</div></body></html>
